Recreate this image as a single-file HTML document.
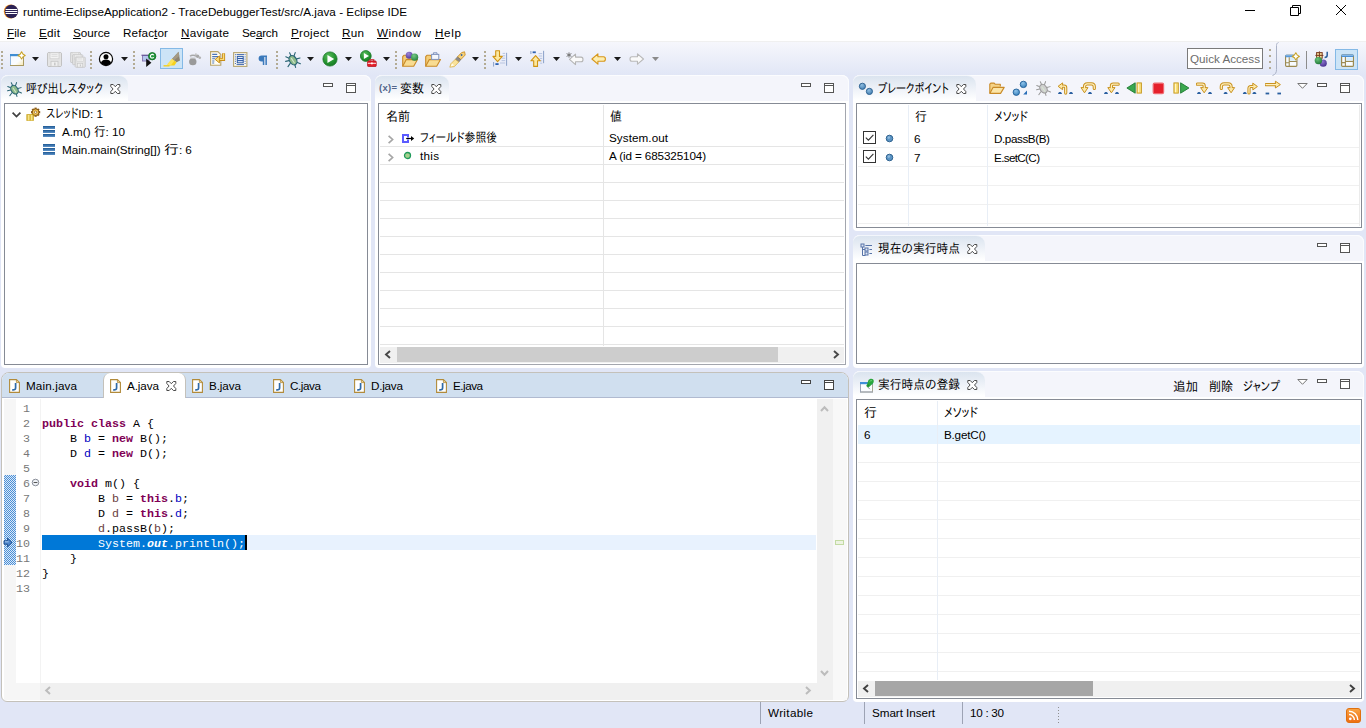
<!DOCTYPE html>
<html lang="ja">
<head>
<meta charset="utf-8">
<title>runtime-EclipseApplication2 - TraceDebuggerTest/src/A.java - Eclipse IDE</title>
<style>
html,body{margin:0;padding:0;}
body{width:1366px;height:728px;overflow:hidden;background:#e1e6f6;}
#win{position:relative;width:1366px;height:728px;overflow:hidden;background:#e1e6f6;font:11.7px/20px "Liberation Sans","IPAPGothic","Noto Sans CJK JP",sans-serif;color:#000;}
#win div,#win svg,#win .tx{position:absolute;box-sizing:border-box;}
.tx{white-space:pre;height:20px;line-height:20px;font-feature-settings:"palt";}
.tx u{text-decoration-thickness:1px;text-underline-offset:1px;}
.j{font-size:13px;display:inline-block;transform-origin:0 50%;}
.mono{font-family:"Liberation Mono","DejaVu Sans Mono",monospace;font-size:11.67px;font-feature-settings:normal;}
.kw{font-weight:bold;color:#7f0055;}
.fld{color:#0000c0;}
.loc{color:#6a3e3e;}
.ln{color:#787878;}
.sel,.sel span{color:#fff;}
.panel{background:#fff;border-radius:7px 7px 4px 4px;overflow:hidden;}
.phead{background:#f4f5fb;border:1px solid #fbfcfe;border-bottom:none;border-radius:7px 7px 0 0;}
.tab{background:linear-gradient(#dbe4ef,#eef2f8 50%,#fff 92%);border-radius:7px 9px 0 0;border-top:1px solid #f3f6fb;}
.content{background:#fff;border:1px solid #868b95;}
.hl{background:#f0f0f0;}
.hl2{background:#e5e5e5;}
.vl{background:#e8eef6;}
.sb{background:#f0f0f0;}
.thumb{background:#cdcdcd;}
.tbsel{background:#cce4f7;border:1px solid #84b9e6;}
</style>
</head>
<body>
<div id="win">
<div style="left:0px;top:0px;width:1366px;height:41px;background:#fff"></div>
<svg style="left:3px;top:3px" width="16" height="17" viewBox="0 0 16 17"><circle cx="7.700" cy="8.500" r="6.900" fill="#f7941e"/><circle cx="8.400" cy="8.500" r="6.700" fill="#2c2255"/><rect x="2.600" y="6" width="11.600" height="1" fill="#fff"/><rect x="2.400" y="8" width="12" height="1" fill="#fff"/><rect x="2.600" y="10" width="11.600" height="1" fill="#fff"/></svg>
<svg style="left:1240px;top:0" width="126" height="22" viewBox="0 0 126 22" fill="none" stroke="#000" stroke-width="1"><path d="M5 10.5h10"/><path d="M50.5 7.5h8v8h-8z"/><path d="M52.5 7.5v-2h8v8h-2"/><path d="M96 5l10 10M106 5l-10 10"/></svg>
<div style="left:0px;top:41px;width:1366px;height:34px;background:linear-gradient(#f6f7fc,#e1e6f6);border-top:1px solid #f0f0f0"></div>
<svg style="left:1px;top:51px" width="3" height="20" viewBox="0 0 3 20"><rect x="0" y="0" width="2" height="2" fill="#b3ab94"/><rect x="0" y="4" width="2" height="2" fill="#b3ab94"/><rect x="0" y="8" width="2" height="2" fill="#b3ab94"/><rect x="0" y="12" width="2" height="2" fill="#b3ab94"/><rect x="0" y="16" width="2" height="2" fill="#b3ab94"/></svg>
<svg style="left:9px;top:51px" width="17" height="16" viewBox="0 0 17 16"><defs><linearGradient id="gnw" x1="0" y1="0" x2="1" y2="1"><stop offset="0" stop-color="#f4f9ff"/><stop offset=".6" stop-color="#fbfdff"/><stop offset="1" stop-color="#f7e7ae"/></linearGradient></defs><rect x="1.5" y="3.5" width="13" height="11" fill="url(#gnw)" stroke="#a99a62"/><path d="M1.5 14V3.5" stroke="#8fb5dd"/><rect x="1" y="3" width="10.5" height="2.2" fill="#3f8dd3"/><path d="M12.6 0.7999999999999998l1.3 2.3 2.3 1.3-2.3 1.3-1.3 2.3-1.3-2.3-2.3-1.3 2.3-1.3z" transform="scale(1)" fill="#fff8d8" stroke="#c9a227" stroke-width="1.1" stroke-linejoin="round"/><path d="M12.6 2.8v3.6M10.799999999999999 4.6h3.6" stroke="#fff" stroke-width="1.1"/></svg>
<svg style="left:32px;top:57px" width="7" height="4" viewBox="0 0 7 4"><path d="M0 0h7L3.5 4z" fill="#1a1a1a"/></svg>
<svg style="left:47px;top:52px" width="15" height="15" viewBox="0 0 15 15"><g transform="translate(0 0) scale(1.0)"><path d="M1.2.5h12.6l.7.7v12.6l-.7.7H1.2l-.7-.7V1.2z" fill="#e4e4e4" stroke="#c2c2c2"/><rect x="3" y=".8" width="9" height="6" fill="#f3f3f3" stroke="#cfcfcf" stroke-width=".8"/><path d="M4.5 2.6h6M4.5 4.4h6" stroke="#d4d4d4" stroke-width=".8"/><rect x="4" y="9.3" width="7" height="5" fill="#efefef" stroke="#c6c6c6" stroke-width=".8"/><rect x="7" y="10.6" width="1.6" height="2.8" fill="#c9c9c9"/></g></svg>
<svg style="left:70px;top:52px" width="16" height="16" viewBox="0 0 16 16"><g transform="translate(0 0) scale(0.72)"><path d="M1.2.5h12.6l.7.7v12.6l-.7.7H1.2l-.7-.7V1.2z" fill="#e4e4e4" stroke="#c2c2c2"/><rect x="3" y=".8" width="9" height="6" fill="#f3f3f3" stroke="#cfcfcf" stroke-width=".8"/><path d="M4.5 2.6h6M4.5 4.4h6" stroke="#d4d4d4" stroke-width=".8"/><rect x="4" y="9.3" width="7" height="5" fill="#efefef" stroke="#c6c6c6" stroke-width=".8"/><rect x="7" y="10.6" width="1.6" height="2.8" fill="#c9c9c9"/></g><g transform="translate(2.3 2.3) scale(0.72)"><path d="M1.2.5h12.6l.7.7v12.6l-.7.7H1.2l-.7-.7V1.2z" fill="#e4e4e4" stroke="#c2c2c2"/><rect x="3" y=".8" width="9" height="6" fill="#f3f3f3" stroke="#cfcfcf" stroke-width=".8"/><path d="M4.5 2.6h6M4.5 4.4h6" stroke="#d4d4d4" stroke-width=".8"/><rect x="4" y="9.3" width="7" height="5" fill="#efefef" stroke="#c6c6c6" stroke-width=".8"/><rect x="7" y="10.6" width="1.6" height="2.8" fill="#c9c9c9"/></g><g transform="translate(4.8 4.8) scale(0.72)"><path d="M1.2.5h12.6l.7.7v12.6l-.7.7H1.2l-.7-.7V1.2z" fill="#e4e4e4" stroke="#c2c2c2"/><rect x="3" y=".8" width="9" height="6" fill="#f3f3f3" stroke="#cfcfcf" stroke-width=".8"/><path d="M4.5 2.6h6M4.5 4.4h6" stroke="#d4d4d4" stroke-width=".8"/><rect x="4" y="9.3" width="7" height="5" fill="#efefef" stroke="#c6c6c6" stroke-width=".8"/><rect x="7" y="10.6" width="1.6" height="2.8" fill="#c9c9c9"/></g></svg>
<svg style="left:90px;top:51px" width="3" height="20" viewBox="0 0 3 20"><rect x="0" y="0" width="2" height="2" fill="#b3ab94"/><rect x="0" y="4" width="2" height="2" fill="#b3ab94"/><rect x="0" y="8" width="2" height="2" fill="#b3ab94"/><rect x="0" y="12" width="2" height="2" fill="#b3ab94"/><rect x="0" y="16" width="2" height="2" fill="#b3ab94"/></svg>
<svg style="left:98px;top:51px" width="16" height="16" viewBox="0 0 16 16"><circle cx="8" cy="8" r="6.6" fill="#fff" stroke="#0a0a0a" stroke-width="1.2"/><circle cx="8" cy="5.8" r="2.5" fill="#000"/><path d="M2.9 12.3c.5-2.6 2.4-3.7 5.1-3.7s4.6 1.1 5.1 3.7A6.4 6.4 0 0 1 8 14.2a6.4 6.4 0 0 1-5.1-1.9z" fill="#000"/></svg>
<svg style="left:121px;top:57px" width="7" height="4" viewBox="0 0 7 4"><path d="M0 0h7L3.5 4z" fill="#1a1a1a"/></svg>
<svg style="left:133px;top:51px" width="3" height="20" viewBox="0 0 3 20"><rect x="0" y="0" width="2" height="2" fill="#b3ab94"/><rect x="0" y="4" width="2" height="2" fill="#b3ab94"/><rect x="0" y="8" width="2" height="2" fill="#b3ab94"/><rect x="0" y="12" width="2" height="2" fill="#b3ab94"/><rect x="0" y="16" width="2" height="2" fill="#b3ab94"/></svg>
<svg style="left:141px;top:51px" width="16" height="17" viewBox="0 0 16 17"><rect x="1.500" y="4.500" width="6.500" height="5.500" fill="#b4c6ec" stroke="#8a7ab4" stroke-width="1"/><path d="M.5 4.300h8.500" stroke="#6a5a9a" stroke-width="1.300"/><path d="M5.200 7.400l5.200 4.300-5.200 4.300z" fill="#111"/><circle cx="11.200" cy="5.200" r="3.700" fill="#24983c" stroke="#0f6a22" stroke-width=".8"/><path d="M12.700 4.200a1.800 1.800 0 1 0 0 2" fill="none" stroke="#fff" stroke-width="1.100"/></svg>
<div class="tbsel" style="left:160px;top:48px;width:23px;height:21px;"></div>
<svg style="left:163px;top:50px" width="18" height="17" viewBox="0 0 18 17"><path d="M15.6 1.8L17 10.5l-3.4 1.8-4.6-3.2z" fill="#8d8572"/><path d="M15.6 1.8l.7 4.2-5 3.9-2.3-.8z" fill="#a49b85"/><path d="M9 9.1l4.6 3.2-2.2 3.2H5.3l-.9-1.2z" fill="#f7d21c"/><path d="M9 9.1l2.4 1.6-3.6 4.8H5.3l-.9-1.2z" fill="#fbe25a"/><path d="M.5 15.8h6" stroke="#f3cf1e" stroke-width="1.4"/></svg>
<svg style="left:188px;top:52px" width="14" height="14" viewBox="0 0 14 14"><ellipse cx="4.8" cy="9.7" rx="3.7" ry="3.5" fill="#9a9a9a"/><path d="M2 4.2c1.5-1.4 4.5-1.4 6 0" fill="none" stroke="#a8a8a8" stroke-width="1.5"/><path d="M2.2 6.2h5.4" stroke="#bdbdbd" stroke-width="1.2"/><circle cx="9.6" cy="4.2" r="1.7" fill="#a6a6a6"/><circle cx="11.8" cy="5.8" r="1.3" fill="#b3b3b3"/><circle cx="7.9" cy="2.3" r="1" fill="#c4c4c4"/></svg>
<svg style="left:210px;top:51px" width="16" height="15" viewBox="0 0 16 15"><path d="M.6.6h7.2l3 3v10.6H.6z" fill="#fffdf3" stroke="#b9a468" stroke-width="1.1"/><path d="M2.2 3.4h5M2.2 5.6h6.4M2.2 7.8h3M2.2 10h2.2M2.2 12h2" stroke="#4a74b8" stroke-width="1.1"/><path d="M13.6 2.2v6.2H8.6" fill="none" stroke="#c98e18" stroke-width="3"/><path d="M13.6 2.4v6H8.6" fill="none" stroke="#fbdc7a" stroke-width="1.2"/><path d="M9.4 4.9v7L5.2 8.4z" fill="#fbdc7a" stroke="#c98e18" stroke-width="1"/></svg>
<svg style="left:233px;top:52px" width="15" height="15" viewBox="0 0 15 15"><rect x=".6" y=".6" width="13.3" height="13.8" fill="#fdfaf0" stroke="#b7a672" stroke-width="1.1"/><path d="M2.4 2.2v11" stroke="#3f67b0" stroke-width="1" stroke-dasharray="1 1.2"/><path d="M12.1 2.2v11" stroke="#3f67b0" stroke-width="1" stroke-dasharray="1 1.2"/><path d="M3.6 2.6h7.4M3.6 12.6h7.4" stroke="#3f67b0" stroke-width="1"/><rect x="4.3" y="4.4" width="5.9" height="6.4" fill="#dfe9f8" stroke="#2d5aa6" stroke-width="1"/><path d="M4.3 6.5h5.9M4.3 8.6h5.9" stroke="#2d5aa6" stroke-width="1"/></svg>
<svg style="left:258px;top:55px" width="10" height="10" viewBox="0 0 10 10"><path d="M9 .6H3.6a3 3 0 0 0 0 6H4.8V10h1.5V2h1.1v8h1.5V2H9z" fill="#3b79bb"/></svg>
<svg style="left:276px;top:51px" width="3" height="20" viewBox="0 0 3 20"><rect x="0" y="0" width="2" height="2" fill="#b3ab94"/><rect x="0" y="4" width="2" height="2" fill="#b3ab94"/><rect x="0" y="8" width="2" height="2" fill="#b3ab94"/><rect x="0" y="12" width="2" height="2" fill="#b3ab94"/><rect x="0" y="16" width="2" height="2" fill="#b3ab94"/></svg>
<svg style="left:285px;top:52px" width="16" height="16" viewBox="0 0 16 16"><g transform="translate(0 0) scale(1.0)" fill="none" stroke="#2a6575" stroke-width="1.100" stroke-linecap="round"><path d="M4.600 .8l1.700 3.600M10.200 .6L9 4M.8 4.800l3.800 1.600M.6 9.400l3.400-.800M3 14.600l2.200-3.200M15 6l-3.400 .900M15.400 11.800l-3.600-1.600M10.600 15.400l-.900-3.200"/><ellipse cx="8" cy="8.200" rx="3.500" ry="5" transform="rotate(-32 8 8.200)" fill="#8dba8a" stroke="#2a6575" stroke-width="1.200"/><path d="M6.400 6.400l3 4.600" stroke="#d8ead2" stroke-width="1.100" opacity=".9"/></g></svg>
<svg style="left:307px;top:57px" width="7" height="4" viewBox="0 0 7 4"><path d="M0 0h7L3.5 4z" fill="#1a1a1a"/></svg>
<svg style="left:322px;top:51px" width="16" height="16" viewBox="0 0 16 16"><defs><radialGradient id="gpl1" cx=".4" cy=".3" r=".8"><stop offset="0" stop-color="#57bb5a"/><stop offset=".6" stop-color="#23922f"/><stop offset="1" stop-color="#14701f"/></radialGradient></defs><circle cx="8" cy="8" r="7.1" fill="url(#gpl1)" stroke="#1b7a28" stroke-width=".8"/><path d="M5.444000000000001 4.024v7.952l6.744999999999999 -3.976z" fill="#fff"/></svg>
<svg style="left:345px;top:57px" width="7" height="4" viewBox="0 0 7 4"><path d="M0 0h7L3.5 4z" fill="#1a1a1a"/></svg>
<svg style="left:360px;top:50px" width="17" height="17" viewBox="0 0 17 17"><defs><radialGradient id="gpl2" cx=".4" cy=".3" r=".8"><stop offset="0" stop-color="#57bb5a"/><stop offset=".6" stop-color="#23922f"/><stop offset="1" stop-color="#14701f"/></radialGradient></defs><circle cx="5.8" cy="6" r="5.4" fill="url(#gpl2)" stroke="#1b7a28" stroke-width=".8"/><path d="M3.856 2.9759999999999995v6.048000000000001l5.13 -3.0240000000000005z" fill="#fff"/><rect x="7.6" y="11" width="8.6" height="5.6" rx=".8" fill="#e3202a" stroke="#b40f18" stroke-width=".8"/><path d="M10 11v-1.3h3.8V11" fill="none" stroke="#c8141d" stroke-width="1.1"/><path d="M7.8 13.3h8.2" stroke="#fff" stroke-width=".9"/><rect x="11.1" y="12.5" width="1.6" height="1.8" fill="#fff"/></svg>
<svg style="left:383px;top:57px" width="7" height="4" viewBox="0 0 7 4"><path d="M0 0h7L3.5 4z" fill="#1a1a1a"/></svg>
<svg style="left:395px;top:51px" width="3" height="20" viewBox="0 0 3 20"><rect x="0" y="0" width="2" height="2" fill="#b3ab94"/><rect x="0" y="4" width="2" height="2" fill="#b3ab94"/><rect x="0" y="8" width="2" height="2" fill="#b3ab94"/><rect x="0" y="12" width="2" height="2" fill="#b3ab94"/><rect x="0" y="16" width="2" height="2" fill="#b3ab94"/></svg>
<svg style="left:402px;top:51px" width="17" height="16" viewBox="0 0 17 16"><path d="M.7 15.2V5.6l1.2-1.3h3.6l1.2 1.3h6.2v2.6" fill="#f3cd78" stroke="#c98a28" stroke-width="1.1" stroke-linejoin="round"/><path d="M.7 15.2l3.6-6.6h11.2l-3.8 6.6z" fill="#f8dc92" stroke="#c98a28" stroke-width="1.1" stroke-linejoin="round"/><defs><radialGradient id="gb1" cx=".4" cy=".3" r=".8"><stop offset="0" stop-color="#9d86d6"/><stop offset="1" stop-color="#4a2f95"/></radialGradient></defs><circle cx="7.2" cy="4.2" r="3.5" fill="url(#gb1)"/><defs><radialGradient id="gb2" cx=".4" cy=".3" r=".8"><stop offset="0" stop-color="#74c884"/><stop offset="1" stop-color="#1c7a35"/></radialGradient></defs><circle cx="12.6" cy="6.2" r="3.6" fill="url(#gb2)"/></svg>
<svg style="left:425px;top:51px" width="17" height="16" viewBox="0 0 17 16"><path d="M.7 15.2V5.6l1.2-1.3h3.6l1.2 1.3h6.2v2.6" fill="#f3cd78" stroke="#c98a28" stroke-width="1.1" stroke-linejoin="round"/><path d="M.7 15.2l3.6-6.6h11.2l-3.8 6.6z" fill="#f8dc92" stroke="#c98a28" stroke-width="1.1" stroke-linejoin="round"/><rect x="6.6" y="3.4" width="7.2" height="5" fill="#f4f7fc" stroke="#7f93bd" stroke-width="1"/><path d="M8.4 3.2V1.8h3.6v1.4" fill="none" stroke="#7f93bd" stroke-width="1"/></svg>
<svg style="left:449px;top:51px" width="17" height="17" viewBox="0 0 17 17"><path d="M15.6.8l.6 3.2-4.4 4.6-3.4-2.6 4.2-4.4z" fill="#f7d27a" stroke="#c98e28" stroke-width=".9"/><circle cx="12.6" cy="4" r=".9" fill="#2f62a8"/><path d="M8.4 6l3.4 2.6-2 2.4-3.6-2.6z" fill="#8e8a86" stroke="#6f6b66" stroke-width=".6"/><path d="M6.2 8.4l3.6 2.6-4.4 4.6-4.6.6 1.2-3.6z" fill="#f9e29a" stroke="#d9ab3c" stroke-width=".7"/><path d="M3 12.4l2.2 1.8-3.6 1.4z" fill="#fffdf0"/></svg>
<svg style="left:472px;top:57px" width="7" height="4" viewBox="0 0 7 4"><path d="M0 0h7L3.5 4z" fill="#1a1a1a"/></svg>
<svg style="left:484px;top:51px" width="3" height="20" viewBox="0 0 3 20"><rect x="0" y="0" width="2" height="2" fill="#b3ab94"/><rect x="0" y="4" width="2" height="2" fill="#b3ab94"/><rect x="0" y="8" width="2" height="2" fill="#b3ab94"/><rect x="0" y="12" width="2" height="2" fill="#b3ab94"/><rect x="0" y="16" width="2" height="2" fill="#b3ab94"/></svg>
<svg style="left:492px;top:50px" width="16" height="17" viewBox="0 0 16 17"><path d="M14.6 2.8v13" stroke="#8aa0c8" stroke-width="1"/><path d="M10.6 3.4h2.6M10.6 5.8h2.6M9.6 8.2h3.6M9.6 10.6h3.6M8 13h5.2" stroke="#b8c4e0" stroke-width="1"/><path d="M1.6 12v4.6" stroke="#8aa0c8" stroke-width="1"/><rect x="3.4" y="13.2" width="3.2" height="1.8" fill="#2f62b0"/><path d="M3.7.8h3.8v5.6h2.8L5.6 11.6.9 6.4h2.8z" fill="#fde9a0" stroke="#cf9414" stroke-width="1.1" stroke-linejoin="round"/></svg>
<svg style="left:515px;top:57px" width="7" height="4" viewBox="0 0 7 4"><path d="M0 0h7L3.5 4z" fill="#1a1a1a"/></svg>
<svg style="left:530px;top:50px" width="16" height="17" viewBox="0 0 16 17"><path d="M13.6 .8v12.4" stroke="#8aa0c8" stroke-width="1"/><path d="M8.6 3.6h3.6M8.8 6h3.4M9.6 8.4h2.6M10.2 10.8h2M10.2 13.2h2" stroke="#b8c4e0" stroke-width="1"/><path d="M.9 1v3" stroke="#8aa0c8" stroke-width="1"/><rect x="2.6" y="1.4" width="3.2" height="1.8" fill="#2f62b0"/><path d="M3.7 16.4h3.8v-5.6h2.8L5.6 5.6.9 10.8h2.8z" fill="#fde9a0" stroke="#cf9414" stroke-width="1.1" stroke-linejoin="round"/></svg>
<svg style="left:553px;top:57px" width="7" height="4" viewBox="0 0 7 4"><path d="M0 0h7L3.5 4z" fill="#1a1a1a"/></svg>
<svg style="left:566px;top:52px" width="18" height="14" viewBox="0 0 18 14"><g transform="translate(2.6 1.4)"><path d="M.9 6l6-5.2v2.9h5.6c1.5 0 1.9.6 1.9 2.3s-.4 2.3-1.9 2.3H6.9v2.9z" fill="#fafafa" stroke="#b4b4b4" stroke-width="1.1" stroke-linejoin="round"/></g><path d="M3 .4v5.2M.6 1.6l4.8 2.8M5.4 1.6L.6 4.4" stroke="#6a6a6a" stroke-width=".9"/></svg>
<svg style="left:591px;top:53px" width="16" height="13" viewBox="0 0 16 13"><path d="M.9 6l6-5.2v2.9h5.6c1.5 0 1.9.6 1.9 2.3s-.4 2.3-1.9 2.3H6.9v2.9z" fill="#fdeeb0" stroke="#d7961a" stroke-width="1.1" stroke-linejoin="round"/></svg>
<svg style="left:614px;top:57px" width="7" height="4" viewBox="0 0 7 4"><path d="M0 0h7L3.5 4z" fill="#1a1a1a"/></svg>
<svg style="left:629px;top:53px" width="16" height="13" viewBox="0 0 16 13"><g transform="translate(15.4 0) scale(-1 1)"><path d="M.9 6l6-5.2v2.9h5.6c1.5 0 1.9.6 1.9 2.3s-.4 2.3-1.9 2.3H6.9v2.9z" fill="#fafafa" stroke="#b9b9b9" stroke-width="1.1" stroke-linejoin="round"/></g></svg>
<svg style="left:652px;top:57px" width="7" height="4" viewBox="0 0 7 4"><path d="M0 0h7L3.5 4z" fill="#8a8a8a"/></svg>
<div class="panel" style="left:1px;top:75px;width:370px;height:293px;"></div>
<div class="phead" style="left:1px;top:75px;width:370px;height:26px;"></div>
<div class="tab" style="left:1px;top:75px;width:127px;height:27px;"></div>
<div class="content" style="left:4px;top:103px;width:364px;height:262px;"></div>
<svg style="left:323px;top:83px" width="10" height="4" viewBox="0 0 10 4"><rect x=".5" y=".5" width="9" height="3" fill="#fff" stroke="#555"/></svg>
<svg style="left:346px;top:83px" width="10" height="10" viewBox="0 0 10 10"><rect x=".5" y=".5" width="9" height="9" fill="#fff" stroke="#555"/><path d="M0 2.5h10" stroke="#555"/></svg>
<svg style="left:110px;top:84px" width="11" height="10" viewBox="0 0 11 10"><path d="M.8 .5h2.400L5.300 2.700 7.400.5H9.800v2L7.500 5l2.300 2.500v2H7.400L5.300 7.300 3.200 9.500H.8v-2L3.100 5 .8 2.500z" fill="#fff" stroke="#4a4a4a" stroke-width="1"/></svg>
<div class="panel" style="left:375px;top:75px;width:474px;height:293px;"></div>
<div class="phead" style="left:375px;top:75px;width:474px;height:26px;"></div>
<div class="tab" style="left:375px;top:75px;width:74px;height:27px;"></div>
<div class="content" style="left:378px;top:103px;width:468px;height:262px;border-color:#868b95 #a3a6ae #a3a6ae #868b95"></div>
<svg style="left:801px;top:83px" width="10" height="4" viewBox="0 0 10 4"><rect x=".5" y=".5" width="9" height="3" fill="#fff" stroke="#555"/></svg>
<svg style="left:824px;top:83px" width="10" height="10" viewBox="0 0 10 10"><rect x=".5" y=".5" width="9" height="9" fill="#fff" stroke="#555"/><path d="M0 2.5h10" stroke="#555"/></svg>
<svg style="left:431px;top:84px" width="11" height="10" viewBox="0 0 11 10"><path d="M.8 .5h2.400L5.300 2.700 7.400.5H9.800v2L7.500 5l2.300 2.500v2H7.400L5.300 7.300 3.200 9.500H.8v-2L3.100 5 .8 2.500z" fill="#fff" stroke="#4a4a4a" stroke-width="1"/></svg>
<div class="panel" style="left:853px;top:75px;width:511px;height:156px;"></div>
<div class="phead" style="left:853px;top:75px;width:511px;height:26px;"></div>
<div class="tab" style="left:853px;top:75px;width:123px;height:27px;"></div>
<div class="content" style="left:856px;top:103px;width:506px;height:125px;"></div>
<svg style="left:1317px;top:83px" width="10" height="4" viewBox="0 0 10 4"><rect x=".5" y=".5" width="9" height="3" fill="#fff" stroke="#555"/></svg>
<svg style="left:1340px;top:83px" width="10" height="10" viewBox="0 0 10 10"><rect x=".5" y=".5" width="9" height="9" fill="#fff" stroke="#555"/><path d="M0 2.5h10" stroke="#555"/></svg>
<svg style="left:1297px;top:83px" width="11" height="6" viewBox="0 0 11 6"><path d="M.8.5h9.4L5.5 5.3z" fill="#fff" stroke="#666" stroke-width=".9"/></svg>
<svg style="left:956px;top:84px" width="11" height="10" viewBox="0 0 11 10"><path d="M.8 .5h2.400L5.300 2.700 7.400.5H9.800v2L7.500 5l2.300 2.500v2H7.400L5.300 7.300 3.200 9.500H.8v-2L3.100 5 .8 2.500z" fill="#fff" stroke="#4a4a4a" stroke-width="1"/></svg>
<div class="panel" style="left:853px;top:235px;width:511px;height:133px;"></div>
<div class="phead" style="left:853px;top:235px;width:511px;height:26px;"></div>
<div class="tab" style="left:853px;top:235px;width:132px;height:27px;"></div>
<div class="content" style="left:856px;top:263px;width:506px;height:101px;"></div>
<svg style="left:1317px;top:243px" width="10" height="4" viewBox="0 0 10 4"><rect x=".5" y=".5" width="9" height="3" fill="#fff" stroke="#555"/></svg>
<svg style="left:1340px;top:243px" width="10" height="10" viewBox="0 0 10 10"><rect x=".5" y=".5" width="9" height="9" fill="#fff" stroke="#555"/><path d="M0 2.5h10" stroke="#555"/></svg>
<svg style="left:967px;top:244px" width="11" height="10" viewBox="0 0 11 10"><path d="M.8 .5h2.400L5.300 2.700 7.400.5H9.800v2L7.500 5l2.300 2.500v2H7.400L5.300 7.300 3.200 9.500H.8v-2L3.100 5 .8 2.500z" fill="#fff" stroke="#4a4a4a" stroke-width="1"/></svg>
<div class="panel" style="left:853px;top:371px;width:511px;height:331px;"></div>
<div class="phead" style="left:853px;top:371px;width:511px;height:26px;"></div>
<div class="tab" style="left:853px;top:371px;width:132px;height:27px;"></div>
<div class="content" style="left:856px;top:399px;width:506px;height:300px;"></div>
<svg style="left:1317px;top:379px" width="10" height="4" viewBox="0 0 10 4"><rect x=".5" y=".5" width="9" height="3" fill="#fff" stroke="#555"/></svg>
<svg style="left:1340px;top:379px" width="10" height="10" viewBox="0 0 10 10"><rect x=".5" y=".5" width="9" height="9" fill="#fff" stroke="#555"/><path d="M0 2.5h10" stroke="#555"/></svg>
<svg style="left:1297px;top:379px" width="11" height="6" viewBox="0 0 11 6"><path d="M.8.5h9.4L5.5 5.3z" fill="#fff" stroke="#666" stroke-width=".9"/></svg>
<svg style="left:967px;top:380px" width="11" height="10" viewBox="0 0 11 10"><path d="M.8 .5h2.400L5.300 2.700 7.400.5H9.800v2L7.500 5l2.300 2.500v2H7.400L5.300 7.300 3.200 9.500H.8v-2L3.100 5 .8 2.500z" fill="#fff" stroke="#4a4a4a" stroke-width="1"/></svg>
<svg style="left:7px;top:82px" width="15" height="15" viewBox="0 0 15 15"><g transform="translate(0 0) scale(0.9375)" fill="none" stroke="#2a6575" stroke-width="1.100" stroke-linecap="round"><path d="M4.600 .8l1.700 3.600M10.200 .6L9 4M.8 4.800l3.800 1.600M.6 9.400l3.400-.800M3 14.600l2.200-3.200M15 6l-3.400 .900M15.400 11.800l-3.600-1.600M10.600 15.400l-.900-3.200"/><ellipse cx="8" cy="8.200" rx="3.500" ry="5" transform="rotate(-32 8 8.200)" fill="#8dba8a" stroke="#2a6575" stroke-width="1.200"/><path d="M6.400 6.400l3 4.600" stroke="#d8ead2" stroke-width="1.100" opacity=".9"/></g></svg>
<svg style="left:858px;top:82px" width="16" height="14" viewBox="0 0 16 14"><defs><radialGradient id="gd1" cx=".4" cy=".3" r=".8"><stop offset="0" stop-color="#8fbde0"/><stop offset="1" stop-color="#3a78ad"/></radialGradient></defs><circle cx="4.4" cy="4.3" r="3.1" fill="url(#gd1)"/><circle cx="4.4" cy="4.3" r="3.1" fill="none" stroke="#2a5f8f" stroke-width=".9"/><defs><radialGradient id="gd2" cx=".4" cy=".3" r=".8"><stop offset="0" stop-color="#8fbde0"/><stop offset="1" stop-color="#3a78ad"/></radialGradient></defs><circle cx="11.4" cy="9.4" r="3.1" fill="url(#gd2)"/><circle cx="11.4" cy="9.4" r="3.1" fill="none" stroke="#2a5f8f" stroke-width=".9"/></svg>
<svg style="left:860px;top:243px" width="13" height="13" viewBox="0 0 13 13"><path d="M2.5 3v9.5h3M2.5 6.5h3" fill="none" stroke="#5673a8" stroke-width="1"/><rect x="1" y="1" width="3" height="3" fill="#dfe7f5" stroke="#5673a8" stroke-width="1"/><rect x="5" y="5" width="3" height="3" fill="#dfe7f5" stroke="#5673a8" stroke-width="1"/><rect x="5" y="9" width="3" height="3" fill="#dfe7f5" stroke="#5673a8" stroke-width="1"/><path d="M5.4 2.5H12M9.4 6.5H12M9.4 10.5H12" stroke="#5673a8" stroke-width="1"/></svg>
<svg style="left:859px;top:378px" width="16" height="15" viewBox="0 0 16 15"><rect x="1.5" y="4.5" width="12" height="9.5" fill="#fbfdff" stroke="#a8a692"/><path d="M1.5 14V5M1 14h13" stroke="#9aa3b4" stroke-width="1"/><rect x="1" y="4" width="13" height="2.2" fill="#3f8fd8"/><path d="M7.6 7.6l3.2 3.6" stroke="#7a7f8a" stroke-width=".9"/><path d="M9.4 2.2c1.2-1.6 3.4-2 4.6-.9s1 3.2-.4 4.5L10.4 8.8c-.8.7-1.8.6-2.4-.1s-.6-1.800.1-2.500z" fill="#2aa53c"/><path d="M10.600 3.600c.8-.9 1.800-1.200 2.500-.8" stroke="#7fdc8a" stroke-width=".9" fill="none"/><circle cx="9.200" cy="7.200" r=".8" fill="#1d7d2d"/></svg>
<svg style="left:989px;top:82px" width="16" height="13" viewBox="0 0 16 13"><path d="M.8 11V2.200l1-1.100h3.400l1.100 1.200h5v2.300" fill="#f5d286" stroke="#c98a28" stroke-width="1.1" stroke-linejoin="round"/><path d="M.8 11.400l3.200-6h11.200l-3.600 6z" fill="#fbe5a8" stroke="#c98a28" stroke-width="1.1" stroke-linejoin="round"/></svg>
<svg style="left:1012px;top:80px" width="16" height="16" viewBox="0 0 16 16"><defs><radialGradient id="gd3" cx=".4" cy=".3" r=".8"><stop offset="0" stop-color="#8fc3ea"/><stop offset="1" stop-color="#2f7ab8"/></radialGradient></defs><circle cx="11.4" cy="4.4" r="3.2" fill="url(#gd3)"/><circle cx="11.4" cy="4.4" r="3.2" fill="none" stroke="#24619a" stroke-width=".9"/><defs><radialGradient id="gd4" cx=".4" cy=".3" r=".8"><stop offset="0" stop-color="#8fc3ea"/><stop offset="1" stop-color="#2f7ab8"/></radialGradient></defs><circle cx="4.3" cy="12.2" r="3.2" fill="url(#gd4)"/><circle cx="4.3" cy="12.2" r="3.2" fill="none" stroke="#24619a" stroke-width=".9"/><path d="M15 10.600v3.800h-3.800z" fill="#2a6fb8"/></svg>
<svg style="left:1036px;top:81px" width="15" height="15" viewBox="0 0 15 15"><g transform="translate(0 0) scale(0.9375)" fill="none" stroke="#9a9a9a" stroke-width="1.100" stroke-linecap="round"><path d="M4.600 .8l1.700 3.600M10.200 .6L9 4M.8 4.800l3.800 1.600M.6 9.400l3.400-.800M3 14.600l2.200-3.200M15 6l-3.400 .900M15.400 11.800l-3.600-1.600M10.600 15.400l-.900-3.200"/><ellipse cx="8" cy="8.200" rx="3.500" ry="5" transform="rotate(-32 8 8.200)" fill="#cfcfcf" stroke="#9a9a9a" stroke-width="1.200"/><path d="M6.400 6.400l3 4.600" stroke="#d8ead2" stroke-width="1.100" opacity=".9"/></g></svg>
<svg style="left:1057px;top:82px" width="17" height="13" viewBox="0 0 17 13"><path d="M5.500 4.200h1.600c1.100 0 1.600.500 1.600 1.600v5.300" fill="none" stroke="#c9921f" stroke-width="3.200" stroke-linecap="round" stroke-linejoin="round"/><path d="M5.600 .9v6.800L1.100 4.300z" fill="#fde9a6" stroke="#c9921f" stroke-width="1" stroke-linejoin="round"/><path d="M5.500 4.200h1.600c1.100 0 1.600.500 1.600 1.600v5.300" fill="none" stroke="#fff1c0" stroke-width="1.200" stroke-linecap="round" stroke-linejoin="round"/><path d="M1 12c.5-2.600 3.5-2.600 4 0z" fill="#2a5fa0"/><path d="M12 12c.5-2.600 3.5-2.600 4 0z" fill="#2a5fa0"/></svg>
<svg style="left:1080px;top:82px" width="17" height="13" viewBox="0 0 17 13"><path d="M4.500 6V4.800c0-2 1-2.900 2.900-2.900h4c1.900 0 2.900.900 2.900 2.900v1.600" fill="none" stroke="#c9921f" stroke-width="3.200" stroke-linecap="round" stroke-linejoin="round"/><path d="M1 5.600h7L4.500 10.800z" fill="#fde9a6" stroke="#c9921f" stroke-width="1" stroke-linejoin="round"/><path d="M4.500 6V4.800c0-2 1-2.900 2.900-2.900h4c1.900 0 2.900.900 2.900 2.900v1.600" fill="none" stroke="#fff1c0" stroke-width="1.200" stroke-linecap="round" stroke-linejoin="round"/><path d="M8 12c.5-2.600 3.5-2.600 4 0z" fill="#2a5fa0"/></svg>
<svg style="left:1103px;top:82px" width="17" height="13" viewBox="0 0 17 13"><path d="M15.200 2.200h-5c-1.200 0-1.800.600-1.800 1.800v2" fill="none" stroke="#c9921f" stroke-width="3.200" stroke-linecap="round" stroke-linejoin="round"/><path d="M4.800 5.600h7.200L8.400 10.800z" fill="#fde9a6" stroke="#c9921f" stroke-width="1" stroke-linejoin="round"/><path d="M15.200 2.200h-5c-1.200 0-1.800.600-1.800 1.800v2" fill="none" stroke="#fff1c0" stroke-width="1.200" stroke-linecap="round" stroke-linejoin="round"/><path d="M1 12c.5-2.600 3.5-2.600 4 0z" fill="#2a5fa0"/><path d="M12 12c.5-2.600 3.5-2.600 4 0z" fill="#2a5fa0"/></svg>
<svg style="left:1126px;top:82px" width="17" height="12" viewBox="0 0 17 12"><path d="M9.200 .8v10.400L.9 6z" fill="#3aa84e" stroke="#1f7a32" stroke-width=".9" stroke-linejoin="round"/><rect x="11" y=".9" width="4.400" height="10.200" fill="#fbe07a" stroke="#c4961e" stroke-width=".9"/><path d="M12.6 1.800v8.400" stroke="#fff6c8" stroke-width="1"/></svg>
<svg style="left:1152px;top:82px" width="13" height="13" viewBox="0 0 13 13"><rect x="1.200" y="1.200" width="10.400" height="10.400" rx="1.400" fill="#e5202c" stroke="#ef6a72" stroke-width="1.200"/></svg>
<svg style="left:1173px;top:82px" width="17" height="12" viewBox="0 0 17 12"><rect x="0.9" y=".9" width="4.400" height="10.200" fill="#fbe07a" stroke="#c4961e" stroke-width=".9"/><path d="M2.5 1.800v8.400" stroke="#fff6c8" stroke-width="1"/><path d="M7.600 .8v10.400L15.900 6z" fill="#3aa84e" stroke="#1f7a32" stroke-width=".9" stroke-linejoin="round"/></svg>
<svg style="left:1196px;top:82px" width="17" height="13" viewBox="0 0 17 13"><path d="M1.400 2.200h5c1.200 0 1.800.600 1.800 1.800v2" fill="none" stroke="#c9921f" stroke-width="3.200" stroke-linecap="round" stroke-linejoin="round"/><path d="M4.600 5.600h7.200L8.200 10.800z" fill="#fde9a6" stroke="#c9921f" stroke-width="1" stroke-linejoin="round"/><path d="M1.400 2.200h5c1.200 0 1.800.600 1.800 1.800v2" fill="none" stroke="#fff1c0" stroke-width="1.200" stroke-linecap="round" stroke-linejoin="round"/><path d="M1 12c.5-2.600 3.5-2.600 4 0z" fill="#2a5fa0"/><path d="M12 12c.5-2.600 3.5-2.600 4 0z" fill="#2a5fa0"/></svg>
<svg style="left:1219px;top:82px" width="17" height="13" viewBox="0 0 17 13"><path d="M2.300 6.400V4.800c0-2 1-2.900 2.900-2.900h4c1.900 0 2.900.900 2.900 2.900V6" fill="none" stroke="#c9921f" stroke-width="3.200" stroke-linecap="round" stroke-linejoin="round"/><path d="M8.600 5.600h7L12.100 10.800z" fill="#fde9a6" stroke="#c9921f" stroke-width="1" stroke-linejoin="round"/><path d="M2.300 6.400V4.800c0-2 1-2.900 2.900-2.900h4c1.900 0 2.900.900 2.900 2.900V6" fill="none" stroke="#fff1c0" stroke-width="1.200" stroke-linecap="round" stroke-linejoin="round"/><path d="M4.6 12c.5-2.600 3.5-2.600 4 0z" fill="#2a5fa0"/></svg>
<svg style="left:1242px;top:82px" width="17" height="13" viewBox="0 0 17 13"><path d="M7 11V6.400c0-1.300.600-1.900 1.900-1.900h2.300" fill="none" stroke="#c9921f" stroke-width="3.200" stroke-linecap="round" stroke-linejoin="round"/><path d="M10.800 1.100v6.800l4.600-3.400z" fill="#fde9a6" stroke="#c9921f" stroke-width="1" stroke-linejoin="round"/><path d="M7 11V6.400c0-1.300.600-1.900 1.900-1.900h2.300" fill="none" stroke="#fff1c0" stroke-width="1.200" stroke-linecap="round" stroke-linejoin="round"/><path d="M0.8 12c.5-2.600 3.5-2.600 4 0z" fill="#2a5fa0"/><path d="M10.4 12c.5-2.600 3.5-2.600 4 0z" fill="#2a5fa0"/></svg>
<svg style="left:1265px;top:80px" width="17" height="15" viewBox="0 0 17 15"><path d="M1 4.600h10" fill="none" stroke="#c9921f" stroke-width="3.200" stroke-linecap="round" stroke-linejoin="round"/><path d="M10.400 1.200v6.800l5-3.400z" fill="#fde9a6" stroke="#c9921f" stroke-width="1" stroke-linejoin="round"/><path d="M1 4.600h10" fill="none" stroke="#fff1c0" stroke-width="1.200" stroke-linecap="round" stroke-linejoin="round"/><rect x=".6" y="12.600" width="3.600" height="1.800" fill="#2a5fa0"/><rect x="12.400" y="12.600" width="3.600" height="1.800" fill="#2a5fa0"/></svg>
<svg style="left:11px;top:111px" width="11" height="8" viewBox="0 0 11 8"><path d="M1.600 1.600l3.900 4 3.900-4" fill="none" stroke="#404040" stroke-width="1.700"/></svg>
<svg style="left:26px;top:107px" width="15" height="14" viewBox="0 0 15 14"><rect x="-1.1" y="-4.6" width="2.2" height="2" transform="translate(9.6 5.2) rotate(0)" fill="#8a5a14"/><rect x="-1.1" y="-4.6" width="2.2" height="2" transform="translate(9.6 5.2) rotate(45)" fill="#8a5a14"/><rect x="-1.1" y="-4.6" width="2.2" height="2" transform="translate(9.6 5.2) rotate(90)" fill="#8a5a14"/><rect x="-1.1" y="-4.6" width="2.2" height="2" transform="translate(9.6 5.2) rotate(135)" fill="#8a5a14"/><rect x="-1.1" y="-4.6" width="2.2" height="2" transform="translate(9.6 5.2) rotate(180)" fill="#8a5a14"/><rect x="-1.1" y="-4.6" width="2.2" height="2" transform="translate(9.6 5.2) rotate(225)" fill="#8a5a14"/><rect x="-1.1" y="-4.6" width="2.2" height="2" transform="translate(9.6 5.2) rotate(270)" fill="#8a5a14"/><rect x="-1.1" y="-4.6" width="2.2" height="2" transform="translate(9.6 5.2) rotate(315)" fill="#8a5a14"/><circle cx="9.6" cy="5.2" r="3.3" fill="#f3c85a" stroke="#8a5a14" stroke-width="1"/><circle cx="9.6" cy="5.2" r="1.2" fill="#fff" stroke="#8a5a14" stroke-width=".7"/><rect x=".4" y="7.2" width="7.4" height="6.6" fill="#c9a21a"/><rect x="1.6" y="8" width="2" height="5.4" fill="#f7e48a"/><rect x="4.6" y="8" width="2" height="5.4" fill="#f7e48a"/></svg>
<svg style="left:43px;top:126px" width="12" height="11" viewBox="0 0 12 11"><defs><linearGradient id="gbar126" x1="0" y1="0" x2="0" y2="1"><stop offset="0" stop-color="#1d5893"/><stop offset="1" stop-color="#5d92c8"/></linearGradient></defs><rect y="0" width="12" height="3" fill="url(#gbar126)"/><rect y="4" width="12" height="3" fill="url(#gbar126)"/><rect y="8" width="12" height="3" fill="url(#gbar126)"/></svg>
<svg style="left:43px;top:144px" width="12" height="11" viewBox="0 0 12 11"><defs><linearGradient id="gbar144" x1="0" y1="0" x2="0" y2="1"><stop offset="0" stop-color="#1d5893"/><stop offset="1" stop-color="#5d92c8"/></linearGradient></defs><rect y="0" width="12" height="3" fill="url(#gbar144)"/><rect y="4" width="12" height="3" fill="url(#gbar144)"/><rect y="8" width="12" height="3" fill="url(#gbar144)"/></svg>
<div class="hl2" style="left:380px;top:146px;width:464px;height:1px;"></div>
<div class="hl2" style="left:380px;top:164px;width:464px;height:1px;"></div>
<div class="hl2" style="left:380px;top:182px;width:464px;height:1px;"></div>
<div class="hl2" style="left:380px;top:200px;width:464px;height:1px;"></div>
<div class="hl2" style="left:380px;top:218px;width:464px;height:1px;"></div>
<div class="hl2" style="left:380px;top:236px;width:464px;height:1px;"></div>
<div class="hl2" style="left:380px;top:254px;width:464px;height:1px;"></div>
<div class="hl2" style="left:380px;top:272px;width:464px;height:1px;"></div>
<div class="hl2" style="left:380px;top:290px;width:464px;height:1px;"></div>
<div class="hl2" style="left:380px;top:308px;width:464px;height:1px;"></div>
<div class="hl2" style="left:380px;top:326px;width:464px;height:1px;"></div>
<div class="hl2" style="left:380px;top:344px;width:464px;height:1px;"></div>
<div class="hl2" style="left:603px;top:105px;width:1px;height:241px;"></div>
<svg style="left:387px;top:135px" width="8" height="9" viewBox="0 0 8 9"><path d="M1.600 .8l4 3.700-4 3.700" fill="none" stroke="#a6a6a6" stroke-width="1.700"/></svg>
<svg style="left:387px;top:153px" width="8" height="9" viewBox="0 0 8 9"><path d="M1.600 .8l4 3.700-4 3.700" fill="none" stroke="#a6a6a6" stroke-width="1.700"/></svg>
<svg style="left:402px;top:134px" width="13" height="9" viewBox="0 0 13 9"><path d="M6 3.500V1H1v7h5V5.500" fill="none" stroke="#5b5bff" stroke-width="2"/><path d="M4.200 4.500h6" stroke="#000" stroke-width="1.200"/><path d="M9 2l3.200 2.500L9 7z" fill="#000"/></svg>
<svg style="left:403px;top:151px" width="9" height="9" viewBox="0 0 9 9"><circle cx="4.500" cy="4.500" r="3" fill="#a6d08e" stroke="#1f9a5a" stroke-width="1.300"/></svg>
<div class="sb" style="left:380px;top:347px;width:464px;height:16px;"></div>
<div class="thumb" style="left:397px;top:347px;width:381px;height:15px;"></div>
<svg style="left:384px;top:350px" width="8" height="9" viewBox="0 0 8 9"><path d="M6 1L2 4.5 6 8" fill="none" stroke="#484848" stroke-width="1.900"/></svg>
<svg style="left:832px;top:350px" width="8" height="9" viewBox="0 0 8 9"><path d="M2 1l4 3.5L2 8" fill="none" stroke="#484848" stroke-width="1.900"/></svg>
<div class="hl" style="left:858px;top:147px;width:502px;height:1px;"></div>
<div class="hl" style="left:858px;top:166px;width:502px;height:1px;"></div>
<div class="hl" style="left:858px;top:185px;width:502px;height:1px;"></div>
<div class="hl" style="left:858px;top:204px;width:502px;height:1px;"></div>
<div class="hl" style="left:858px;top:223px;width:502px;height:1px;"></div>
<div style="left:1359px;top:105px;width:1px;height:121px;background:#ebebeb"></div>
<div class="vl" style="left:908px;top:105px;width:1px;height:121px;"></div>
<div class="vl" style="left:987px;top:105px;width:1px;height:121px;"></div>
<svg style="left:863px;top:131px" width="13" height="13" viewBox="0 0 13 13"><rect x=".5" y=".5" width="12" height="12" fill="#fff" stroke="#333"/><path d="M2.8 6.6l2.6 2.6 5-5.4" fill="none" stroke="#333" stroke-width="1.1"/></svg>
<svg style="left:885px;top:134px" width="9" height="9" viewBox="0 0 9 9"><circle cx="4.5" cy="4.5" r="3.3" fill="#5b94c4" stroke="#2f628f" stroke-width="1"/><circle cx="3.8" cy="3.6" r="1.3" fill="#9cc3e3" opacity=".8"/></svg>
<svg style="left:863px;top:150px" width="13" height="13" viewBox="0 0 13 13"><rect x=".5" y=".5" width="12" height="12" fill="#fff" stroke="#333"/><path d="M2.8 6.6l2.6 2.6 5-5.4" fill="none" stroke="#333" stroke-width="1.1"/></svg>
<svg style="left:885px;top:153px" width="9" height="9" viewBox="0 0 9 9"><circle cx="4.5" cy="4.5" r="3.3" fill="#5b94c4" stroke="#2f628f" stroke-width="1"/><circle cx="3.8" cy="3.6" r="1.3" fill="#9cc3e3" opacity=".8"/></svg>
<div style="left:858px;top:425px;width:502px;height:19px;background:#e5f3ff"></div>
<div class="hl" style="left:858px;top:462px;width:502px;height:1px;"></div>
<div class="hl" style="left:858px;top:481px;width:502px;height:1px;"></div>
<div class="hl" style="left:858px;top:500px;width:502px;height:1px;"></div>
<div class="hl" style="left:858px;top:519px;width:502px;height:1px;"></div>
<div class="hl" style="left:858px;top:538px;width:502px;height:1px;"></div>
<div class="hl" style="left:858px;top:557px;width:502px;height:1px;"></div>
<div class="hl" style="left:858px;top:576px;width:502px;height:1px;"></div>
<div class="hl" style="left:858px;top:595px;width:502px;height:1px;"></div>
<div class="hl" style="left:858px;top:614px;width:502px;height:1px;"></div>
<div class="hl" style="left:858px;top:633px;width:502px;height:1px;"></div>
<div class="hl" style="left:858px;top:652px;width:502px;height:1px;"></div>
<div class="hl" style="left:858px;top:671px;width:502px;height:1px;"></div>
<div class="vl" style="left:937px;top:401px;width:1px;height:279px;"></div>
<div class="sb" style="left:858px;top:681px;width:502px;height:16px;"></div>
<div style="left:875px;top:681px;width:218px;height:15px;background:#a6a6a6"></div>
<svg style="left:862px;top:684px" width="8" height="9" viewBox="0 0 8 9"><path d="M6 1L2 4.5 6 8" fill="none" stroke="#404040" stroke-width="1.900"/></svg>
<svg style="left:1348px;top:684px" width="8" height="9" viewBox="0 0 8 9"><path d="M2 1l4 3.5L2 8" fill="none" stroke="#404040" stroke-width="1.900"/></svg>
<div style="left:1px;top:372px;width:848px;height:330px;background:#fff;border:1px solid #c4c1ba;border-radius:8px 8px 6px 6px;overflow:hidden"><div style="left:0;top:0;width:846px;height:25px;background:#d0dfef;border-bottom:1px solid #b0bad0"></div><div style="left:101px;top:0;width:83px;height:25px;background:#fff;border-left:1px solid #c4c1ba;border-right:1px solid #c4c1ba;border-radius:7px 7px 0 0"></div></div>
<svg style="left:801px;top:380px" width="10" height="4" viewBox="0 0 10 4"><rect x=".5" y=".5" width="9" height="3" fill="#fff" stroke="#444"/></svg>
<svg style="left:824px;top:380px" width="10" height="10" viewBox="0 0 10 10"><rect x=".5" y=".5" width="9" height="9" fill="#fff" stroke="#444"/><path d="M0 2.5h10" stroke="#444"/></svg>
<svg style="left:166px;top:381px" width="11" height="10" viewBox="0 0 11 10"><path d="M.8 .5h2.400L5.300 2.700 7.400.5H9.800v2L7.500 5l2.300 2.500v2H7.400L5.300 7.300 3.200 9.500H.8v-2L3.100 5 .8 2.500z" fill="#fff" stroke="#4a4a4a" stroke-width="1"/></svg>
<svg style="left:9px;top:379px" width="11" height="14" viewBox="0 0 11 14"><path d="M.6.6h6.800l3 3v9.800H.6z" fill="#fff" stroke="#b18a3a" stroke-width="1.100"/><path d="M7.400.6v3h3z" fill="#efd9a0" stroke="#b18a3a" stroke-width=".8"/><path d="M6.600 4v5c0 1.500-1.100 2.100-3.400 1.800" fill="none" stroke="#2f6aa8" stroke-width="1.700"/></svg>
<svg style="left:110px;top:379px" width="11" height="14" viewBox="0 0 11 14"><path d="M.6.6h6.800l3 3v9.800H.6z" fill="#fff" stroke="#b18a3a" stroke-width="1.100"/><path d="M7.400.6v3h3z" fill="#efd9a0" stroke="#b18a3a" stroke-width=".8"/><path d="M6.600 4v5c0 1.500-1.100 2.100-3.400 1.800" fill="none" stroke="#2f6aa8" stroke-width="1.700"/></svg>
<svg style="left:192px;top:379px" width="11" height="14" viewBox="0 0 11 14"><path d="M.6.6h6.800l3 3v9.800H.6z" fill="#fff" stroke="#b18a3a" stroke-width="1.100"/><path d="M7.400.6v3h3z" fill="#efd9a0" stroke="#b18a3a" stroke-width=".8"/><path d="M6.600 4v5c0 1.500-1.100 2.100-3.400 1.800" fill="none" stroke="#2f6aa8" stroke-width="1.700"/></svg>
<svg style="left:273px;top:379px" width="11" height="14" viewBox="0 0 11 14"><path d="M.6.6h6.800l3 3v9.800H.6z" fill="#fff" stroke="#b18a3a" stroke-width="1.100"/><path d="M7.400.6v3h3z" fill="#efd9a0" stroke="#b18a3a" stroke-width=".8"/><path d="M6.600 4v5c0 1.500-1.100 2.100-3.400 1.800" fill="none" stroke="#2f6aa8" stroke-width="1.700"/></svg>
<svg style="left:354px;top:379px" width="11" height="14" viewBox="0 0 11 14"><path d="M.6.6h6.800l3 3v9.800H.6z" fill="#fff" stroke="#b18a3a" stroke-width="1.100"/><path d="M7.400.6v3h3z" fill="#efd9a0" stroke="#b18a3a" stroke-width=".8"/><path d="M6.600 4v5c0 1.500-1.100 2.100-3.400 1.800" fill="none" stroke="#2f6aa8" stroke-width="1.700"/></svg>
<svg style="left:436px;top:379px" width="11" height="14" viewBox="0 0 11 14"><path d="M.6.6h6.800l3 3v9.800H.6z" fill="#fff" stroke="#b18a3a" stroke-width="1.100"/><path d="M7.400.6v3h3z" fill="#efd9a0" stroke="#b18a3a" stroke-width=".8"/><path d="M6.600 4v5c0 1.500-1.100 2.100-3.400 1.800" fill="none" stroke="#2f6aa8" stroke-width="1.700"/></svg>
<div style="left:4px;top:399px;width:12px;height:301px;background:#f6f6f6"></div>
<div style="left:16px;top:683px;width:24px;height:17px;background:#f6f6f6"></div>
<div style="left:40px;top:399px;width:1px;height:284px;background:#f3f3f3"></div>
<div class="sb" style="left:817px;top:399px;width:16px;height:301px;"></div>
<div style="left:833px;top:399px;width:14px;height:301px;background:#f8f8f8"></div>
<div class="sb" style="left:40px;top:683px;width:777px;height:17px;"></div>
<svg style="left:820px;top:405px" width="9" height="7" viewBox="0 0 9 7"><path d="M1 6l3.500-3.800L8 6" fill="none" stroke="#bcbcbc" stroke-width="2"/></svg>
<svg style="left:820px;top:670px" width="9" height="7" viewBox="0 0 9 7"><path d="M1 1l3.500 3.800L8 1" fill="none" stroke="#bcbcbc" stroke-width="2"/></svg>
<svg style="left:44px;top:686px" width="8" height="9" viewBox="0 0 8 9"><path d="M6 1L2.200 4.500 6 8" fill="none" stroke="#bcbcbc" stroke-width="2"/></svg>
<svg style="left:804px;top:686px" width="8" height="9" viewBox="0 0 8 9"><path d="M2 1l3.800 3.500L2 8" fill="none" stroke="#bcbcbc" stroke-width="2"/></svg>
<div style="left:835px;top:540px;width:9px;height:5px;background:#edf3e2;border:1px solid #c3dba3"></div>
<div style="left:4px;top:475px;width:12px;height:90px;background-color:#dbe9f8;background-image:conic-gradient(#4b8fd6 25%,transparent 0 50%,#4b8fd6 0 75%,transparent 0);background-size:2px 2px"></div>
<svg style="left:3px;top:537px" width="10" height="11" viewBox="0 0 10 11"><path d="M1 3.800h3.600V1.200l4.400 4.300-4.400 4.300V7.200H1z" fill="#4f86cc" stroke="#1f4f8f" stroke-width="1" stroke-linejoin="round"/><path d="M2 4.800h3.600" stroke="#a9c8ee" stroke-width="1"/></svg>
<svg style="left:31px;top:478px" width="9" height="9" viewBox="0 0 9 9"><circle cx="4.5" cy="4.5" r="3.300" fill="#eef1f6" stroke="#8a8f9a" stroke-width="1"/><path d="M2.600 4.500h3.800" stroke="#555" stroke-width="1"/></svg>
<div style="left:42px;top:535px;width:774px;height:15px;background:#e8f2fe"></div>
<div style="left:42px;top:535px;width:203px;height:15px;background:#0078d7"></div>
<div style="left:245px;top:535px;width:2px;height:15px;background:#000"></div>
<div style="left:760px;top:702px;width:1px;height:22px;background:#9da3b4"></div>
<div style="left:864px;top:702px;width:1px;height:22px;background:#9da3b4"></div>
<div style="left:962px;top:702px;width:1px;height:22px;background:#9da3b4"></div>
<div style="left:1058px;top:707px;width:1px;height:16px;background:repeating-linear-gradient(#8f8f8f 0 1px,transparent 1px 3px)"></div>
<svg style="left:1346px;top:708px" width="15" height="15" viewBox="0 0 15 15"><defs><linearGradient id="grss" x1="0" y1="0" x2="0" y2="1"><stop offset="0" stop-color="#f9a545"/><stop offset="1" stop-color="#ee6c12"/></linearGradient></defs><rect x=".5" y=".5" width="14" height="14" rx="2.500" fill="url(#grss)" stroke="#e0700f"/><circle cx="4.300" cy="10.800" r="1.400" fill="#fff"/><path d="M3 6.600a5.400 5.400 0 0 1 5.400 5.400M3 3.200A8.800 8.800 0 0 1 11.800 12" fill="none" stroke="#fff" stroke-width="1.500"/></svg>
<div style="left:1187px;top:48px;width:76px;height:21px;background:#fff;border:1px solid #7a7a7a"></div>
<svg style="left:1269px;top:49px" width="3" height="24" viewBox="0 0 3 24"><rect x="0" y="0" width="2" height="2" fill="#b3ab94"/><rect x="0" y="6" width="2" height="2" fill="#b3ab94"/><rect x="0" y="12" width="2" height="2" fill="#b3ab94"/><rect x="0" y="18" width="2" height="2" fill="#b3ab94"/></svg>
<svg style="left:1272px;top:42px" width="8" height="34" viewBox="0 0 8 34"><path d="M6.500 .5c-1.500 .5-2 1.500-2 3v24c0 3-1 5-4 6" fill="none" stroke="#aab2c6" stroke-width="1"/></svg>
<div style="left:1306px;top:51px;width:1px;height:18px;background:#8c8c8c"></div>
<div class="tbsel" style="left:1335px;top:49px;width:23px;height:21px;"></div>
<svg style="left:1285px;top:51px" width="16" height="16" viewBox="0 0 16 16"><g transform="translate(0 3.400) scale(.96)"><rect x=".6" y="1" width="11.8" height="11.4" rx="1" fill="#f7fbff" stroke="#9c8a52" stroke-width="1.2"/><rect x=".4" y=".4" width="12.2" height="2.6" rx=".8" fill="#4a90d6"/><path d="M.6 1.4h11.8" stroke="#9cc5ee" stroke-width=".8"/><path d="M4.4 3v9.4M4.4 7.4h8M.6 8.6h3.8" stroke="#9c8a52" stroke-width="1.1"/><rect x="5.2" y="3.4" width="6.6" height="3.2" fill="#d6ecfb"/></g><path d="M10.8 1.8000000000000003l1.3 2.3 2.3 1.3-2.3 1.3-1.3 2.3-1.3-2.3-2.3-1.3 2.3-1.3z" transform="scale(1)" fill="#fff8d8" stroke="#c9a227" stroke-width="1.1" stroke-linejoin="round"/><path d="M10.8 3.6000000000000005v3.6M9.0 5.4h3.6" stroke="#fff" stroke-width="1.1"/></svg>
<svg style="left:1314px;top:51px" width="16" height="17" viewBox="0 0 16 17"><rect x="2.6" y="1.6" width="5.6" height="5.6" fill="#f6dc9a" stroke="#7a3c22" stroke-width="1"/><path d="M5.4 .4v8M1.4 4.4h8" stroke="#7a3c22" stroke-width="1"/><path d="M13.2 .8v3.4c0 1.6-.8 2.2-2.6 2.2" fill="none" stroke="#2a5f9a" stroke-width="1.5"/><defs><radialGradient id="gb3" cx=".4" cy=".3" r=".8"><stop offset="0" stop-color="#8c76cc"/><stop offset="1" stop-color="#3d2788"/></radialGradient></defs><circle cx="9.2" cy="12.2" r="3.6" fill="url(#gb3)"/><defs><radialGradient id="gb4" cx=".4" cy=".3" r=".8"><stop offset="0" stop-color="#6cc47c"/><stop offset="1" stop-color="#167030"/></radialGradient></defs><circle cx="4.4" cy="9.6" r="3.7" fill="url(#gb4)"/></svg>
<svg style="left:1341px;top:54px" width="13" height="13" viewBox="0 0 13 13"><rect x=".6" y="1" width="11.8" height="11.4" rx="1" fill="#f7fbff" stroke="#9c8a52" stroke-width="1.2"/><rect x=".4" y=".4" width="12.2" height="2.6" rx=".8" fill="#4a90d6"/><path d="M.6 1.4h11.8" stroke="#9cc5ee" stroke-width=".8"/><path d="M4.4 3v9.4M4.4 7.4h8M.6 8.6h3.8" stroke="#9c8a52" stroke-width="1.1"/><rect x="5.2" y="3.4" width="6.6" height="3.2" fill="#d6ecfb"/></svg>
<span id="t0" class="tx" style="left:23px;top:2px;letter-spacing:0.03px;">runtime-EclipseApplication2 - TraceDebuggerTest/src/A.java - Eclipse IDE</span>
<span id="t1" class="tx" style="left:7px;top:23px;letter-spacing:0.05px;"><u>F</u>ile</span>
<span id="t2" class="tx" style="left:39px;top:23px;letter-spacing:0.28px;"><u>E</u>dit</span>
<span id="t3" class="tx" style="left:73px;top:23px;letter-spacing:-0.01px;"><u>S</u>ource</span>
<span id="t4" class="tx" style="left:123px;top:23px;letter-spacing:0.11px;">Refac<u>t</u>or</span>
<span id="t5" class="tx" style="left:181px;top:23px;letter-spacing:0.26px;"><u>N</u>avigate</span>
<span id="t6" class="tx" style="left:242px;top:23px;letter-spacing:-0.21px;">Se<u>a</u>rch</span>
<span id="t7" class="tx" style="left:291px;top:23px;letter-spacing:0.27px;"><u>P</u>roject</span>
<span id="t8" class="tx" style="left:342px;top:23px;letter-spacing:0.27px;"><u>R</u>un</span>
<span id="t9" class="tx" style="left:377px;top:23px;letter-spacing:0.48px;"><u>W</u>indow</span>
<span id="t10" class="tx" style="left:435px;top:23px;letter-spacing:0.65px;"><u>H</u>elp</span>
<span id="t11" class="tx" style="left:26px;top:79px;"><span class="j" style="width:77.0px;transform:scaleX(0.850)">呼び出しスタック</span></span>
<span id="t12" class="tx" style="left:400px;top:79px;"><span class="j" style="width:24.0px;transform:scaleX(0.923)">変数</span></span>
<span id="t13" class="tx" style="left:379px;top:78px;letter-spacing:0.28px;font-size:9.500px;font-weight:bold;color:#51658a;">(x)=</span>
<span id="t14" class="tx" style="left:878px;top:79px;"><span class="j" style="width:71.0px;transform:scaleX(0.815)">ブレークポイント</span></span>
<span id="t15" class="tx" style="left:878px;top:239px;"><span class="j" style="width:82.0px;transform:scaleX(0.905)">現在の実行時点</span></span>
<span id="t16" class="tx" style="left:878px;top:375px;"><span class="j" style="width:82.0px;transform:scaleX(0.905)">実行時点の登録</span></span>
<span id="t17" class="tx" style="left:1173px;top:377px;"><span class="j" style="width:25.0px;transform:scaleX(0.962)">追加</span></span>
<span id="t18" class="tx" style="left:1209px;top:377px;"><span class="j" style="width:24.0px;transform:scaleX(0.923)">削除</span></span>
<span id="t19" class="tx" style="left:1243px;top:377px;"><span class="j" style="width:37.0px;transform:scaleX(0.832)">ジャンプ</span></span>
<span id="t20" class="tx" style="left:46px;top:104px;"><span class="j" style="width:32.3px;transform:scaleX(0.784)">スレッド</span>ID: 1</span>
<span id="t21" class="tx" style="left:62px;top:122px;">A.m() <span class="j" style="width:11.7px;transform:scaleX(0.899)">行</span>: 10</span>
<span id="t22" class="tx" style="left:62px;top:140px;">Main.main(String[]) <span class="j" style="width:14.9px;transform:scaleX(1.150)">行</span>: 6</span>
<span id="t23" class="tx" style="left:386px;top:107px;"><span class="j" style="width:24.0px;transform:scaleX(0.923)">名前</span></span>
<span id="t24" class="tx" style="left:610px;top:107px;"><span class="j" style="width:12.0px;transform:scaleX(0.923)">値</span></span>
<span id="t25" class="tx" style="left:420px;top:128px;"><span class="j" style="width:77.0px;transform:scaleX(0.831)">フィールド参照後</span></span>
<span id="t26" class="tx" style="left:609px;top:128px;letter-spacing:0.06px;">System.out</span>
<span id="t27" class="tx" style="left:420px;top:146px;letter-spacing:0.27px;">this</span>
<span id="t28" class="tx" style="left:609px;top:146px;letter-spacing:-0.12px;">A (id = 685325104)</span>
<span id="t29" class="tx" style="left:915px;top:107px;"><span class="j" style="width:12.0px;transform:scaleX(0.923)">行</span></span>
<span id="t30" class="tx" style="left:994px;top:107px;"><span class="j" style="width:34.0px;transform:scaleX(0.863)">メソッド</span></span>
<span id="t31" class="tx" style="left:914px;top:129px;">6</span>
<span id="t32" class="tx" style="left:994px;top:129px;letter-spacing:-0.42px;">D.passB(B)</span>
<span id="t33" class="tx" style="left:914px;top:148px;">7</span>
<span id="t34" class="tx" style="left:994px;top:148px;letter-spacing:-0.66px;">E.setC(C)</span>
<span id="t35" class="tx" style="left:864px;top:403px;"><span class="j" style="width:13.0px;transform:scaleX(1.000)">行</span></span>
<span id="t36" class="tx" style="left:944px;top:403px;"><span class="j" style="width:34.0px;transform:scaleX(0.863)">メソッド</span></span>
<span id="t37" class="tx" style="left:864px;top:425px;">6</span>
<span id="t38" class="tx" style="left:944px;top:425px;letter-spacing:-0.22px;">B.getC()</span>
<span id="t39" class="tx" style="left:26px;top:376px;letter-spacing:0.12px;">Main.java</span>
<span id="t40" class="tx" style="left:127px;top:376px;letter-spacing:-0.10px;">A.java</span>
<span id="t41" class="tx" style="left:209px;top:376px;letter-spacing:-0.10px;">B.java</span>
<span id="t42" class="tx" style="left:290px;top:376px;letter-spacing:-0.43px;">C.java</span>
<span id="t43" class="tx" style="left:371px;top:376px;letter-spacing:-0.23px;">D.java</span>
<span id="t44" class="tx" style="left:453px;top:376px;letter-spacing:-0.50px;">E.java</span>
<span id="t45" class="tx mono ln" style="left:23px;top:399px;">1</span>
<span id="t46" class="tx mono ln" style="left:23px;top:414px;">2</span>
<span id="t47" class="tx mono" style="left:42px;top:414px;"><span class="kw">public</span> <span class="kw">class</span> A {</span>
<span id="t48" class="tx mono ln" style="left:23px;top:429px;">3</span>
<span id="t49" class="tx mono" style="left:42px;top:429px;">    B <span class="fld">b</span> = <span class="kw">new</span> B();</span>
<span id="t50" class="tx mono ln" style="left:23px;top:444px;">4</span>
<span id="t51" class="tx mono" style="left:42px;top:444px;">    D <span class="fld">d</span> = <span class="kw">new</span> D();</span>
<span id="t52" class="tx mono ln" style="left:23px;top:459px;">5</span>
<span id="t53" class="tx mono ln" style="left:23px;top:474px;">6</span>
<span id="t54" class="tx mono" style="left:42px;top:474px;">    <span class="kw">void</span> m() {</span>
<span id="t55" class="tx mono ln" style="left:23px;top:489px;">7</span>
<span id="t56" class="tx mono" style="left:42px;top:489px;">        B <span class="loc">b</span> = <span class="kw">this</span>.<span class="fld">b</span>;</span>
<span id="t57" class="tx mono ln" style="left:23px;top:504px;">8</span>
<span id="t58" class="tx mono" style="left:42px;top:504px;">        D <span class="loc">d</span> = <span class="kw">this</span>.<span class="fld">d</span>;</span>
<span id="t59" class="tx mono ln" style="left:23px;top:519px;">9</span>
<span id="t60" class="tx mono" style="left:42px;top:519px;">        <span class="loc">d</span>.passB(<span class="loc">b</span>);</span>
<span id="t61" class="tx mono ln" style="left:16px;top:534px;">10</span>
<span id="t62" class="tx mono sel" style="left:42px;top:534px;">        System.<b><i>out</i></b>.println();</span>
<span id="t63" class="tx mono ln" style="left:16px;top:549px;">11</span>
<span id="t64" class="tx mono" style="left:42px;top:549px;">    }</span>
<span id="t65" class="tx mono ln" style="left:16px;top:564px;">12</span>
<span id="t66" class="tx mono" style="left:42px;top:564px;">}</span>
<span id="t67" class="tx mono ln" style="left:16px;top:579px;">13</span>
<span id="t68" class="tx" style="left:768px;top:703px;letter-spacing:0.33px;">Writable</span>
<span id="t69" class="tx" style="left:872px;top:703px;letter-spacing:-0.06px;">Smart Insert</span>
<span id="t70" class="tx" style="left:970px;top:703px;letter-spacing:-0.29px;">10 : 30</span>
<span id="t71" class="tx" style="left:1190px;top:49px;letter-spacing:-0.01px;color:#6d6d6d">Quick Access</span>
</div>
</body>
</html>
